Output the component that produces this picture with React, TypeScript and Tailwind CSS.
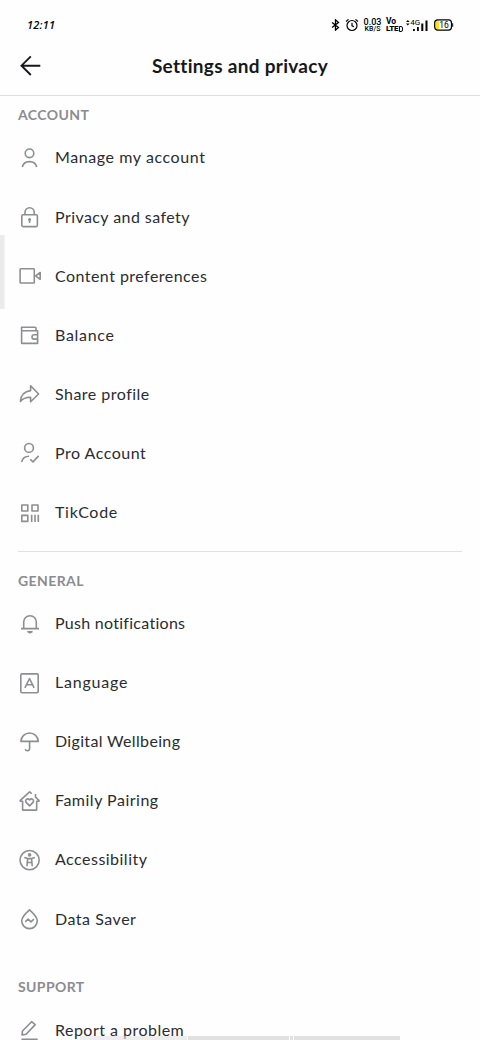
import type { ReactNode } from "react"

type Item = {
  label: string
  icon: ReactNode
  spacing: string
}

const accountItems: Item[] = [
  {
    label: "Manage my account",
    spacing: "tracking-[0.58px]",
    icon: (
      <>
        <circle cx="11.5" cy="7.3" r="4.3" />
        <path d="M4.3 21c.7-3.6 3.5-5.4 7.2-5.4s6.5 1.8 7.2 5.4" />
      </>
    ),
  },
  {
    label: "Privacy and safety",
    spacing: "tracking-[0.43px]",
    icon: (
      <>
        <rect x="3.8" y="9.8" width="15.6" height="11.8" rx="1.3" />
        <path d="M7 9.8V7.4a4.6 4.6 0 0 1 9.2 0v2.4M11.6 14.5v3.6" />
        <circle cx="11.6" cy="14.5" r=".7" />
      </>
    ),
  },
  {
    label: "Content preferences",
    spacing: "tracking-[0.46px]",
    icon: (
      <>
        <rect x="2.1" y="4.8" width="14.2" height="14.2" rx=".8" />
        <path d="m17.6 11.8 4.6-3.3v6.8z" />
      </>
    ),
  },
  {
    label: "Balance",
    spacing: "tracking-[0.7px]",
    icon: (
      <>
        <path d="M18 7.6V5.2c0-.6-.4-1-1-1H3.6v15.5c0 .4.3.7.7.7h15.3V7.8H3.6" />
        <path d="M19.6 11.7h-3.4a2.2 2.2 0 0 0 0 4.4h3.4" />
      </>
    ),
  },
  {
    label: "Share profile",
    spacing: "tracking-[0.48px]",
    icon: <path d="m12.6 3.8 8 8.2-8 7.8v-4.6c-4.5-.1-7.6.9-10.2 4.2.5-6.3 4-10 10.2-10.8z" />,
  },
  {
    label: "Pro Account",
    spacing: "tracking-[0.5px]",
    icon: (
      <>
        <circle cx="11" cy="6.9" r="4.4" />
        <path d="M3.6 21c.9-3.9 3.6-5.8 7.5-5.8M12.2 18.4l2.8 2.5 5.6-6" />
      </>
    ),
  },
  {
    label: "TikCode",
    spacing: "tracking-[0.7px]",
    icon: (
      <>
        <rect x="3.8" y="4" width="6" height="6" />
        <rect x="14" y="4" width="6" height="6" />
        <rect x="3.8" y="14.4" width="6" height="6" />
        <path d="M13.7 13.7v7.4M17 13.7v7.4M20.3 13.7v7.4" />
      </>
    ),
  },
]

const generalItems: Item[] = [
  {
    label: "Push notifications",
    spacing: "tracking-[0.28px]",
    icon: (
      <>
        <path d="M3 16.6h18M5.7 16.4V10a6.3 6.3 0 0 1 12.6 0v6.4" />
        <path d="M10 19.7h4l-2 1z" />
      </>
    ),
  },
  {
    label: "Language",
    spacing: "tracking-[0.78px]",
    icon: (
      <>
        <rect x="2.8" y="2.9" width="17.4" height="18.8" rx="1.2" />
        <path d="m6.9 16.8 4.6-9.3 4.6 9.3M8.5 13.8h6" />
      </>
    ),
  },
  {
    label: "Digital Wellbeing",
    spacing: "tracking-[0.34px]",
    icon: <path d="M2.9 11.4c.3-5 4-8.4 8.7-8.4s8.4 3.4 8.7 8.4zM11.6 11.4v7.2c0 1.5-1 2.2-2.2 2.2-1.1 0-1.9-.6-2.1-1.6" />,
  },
  {
    label: "Family Pairing",
    spacing: "tracking-[0.5px]",
    icon: (
      <>
        <path d="M13.7 4.6 11.6 2.9l-9.3 8.4c-.4.4-.2.9.4.9h1.9v8.2c0 .4.3.7.7.7h12.7c.4 0 .7-.3.7-.7v-8.2h1.9c.6 0 .7-.5.3-.9l-3.4-3.1V5" />
        <path d="M11.6 16.9 8.2 13.4c-1.8-2.3 1.4-4.9 3.4-2.5 2-2.4 5.2.2 3.4 2.5z" />
      </>
    ),
  },
  {
    label: "Accessibility",
    spacing: "tracking-[0.48px]",
    icon: (
      <>
        <circle cx="11.6" cy="12.1" r="9.6" />
        <circle cx="11.6" cy="6.9" r="1.8" fill="currentColor" stroke="none" />
        <path d="M6.3 9.6 9.6 10.6h4l3.3-1M9.6 10.6 9 18.3M13.6 10.6l.6 7.7M9.4 14.5h4.4" />
      </>
    ),
  },
  {
    label: "Data Saver",
    spacing: "tracking-[0.52px]",
    icon: (
      <>
        <path d="M11.5 2.9c3.5 3.1 7.8 7 7.8 10.9a7.8 7.8 0 0 1-15.6 0c0-3.9 4.3-7.8 7.8-10.9z" />
        <path d="m7.2 14.8 2.9-2.6 2.9 2.6 2.9-2.6" />
      </>
    ),
  },
]

const supportItems: Item[] = [
  {
    label: "Report a problem",
    spacing: "tracking-[0.48px]",
    icon: (
      <>
        <path d="m4 16.9.5-3.9 9.1-9.3 3.6 2.9-9.1 9.6z" />
        <path d="M3.4 21.3h16.3" />
      </>
    ),
  },
]

function Row({ item }: { item: Item }) {
  return (
    <li className="flex h-[59.1px] shrink-0 items-center pl-[18px]">
      <svg
        viewBox="0 0 24 24"
        className="h-6 w-6 shrink-0 text-[#8d8e91]"
        fill="none"
        stroke="currentColor"
        strokeWidth="1.6"
        strokeLinejoin="round"
      >
        {item.icon}
      </svg>
      <span className={`ml-[13px] pb-px text-[16px] leading-6 whitespace-nowrap text-[#2b2c31] ${item.spacing}`}>
        {item.label}
      </span>
    </li>
  )
}

function SectionTitle({ children, className }: { children: ReactNode; className: string }) {
  return (
    <h2 className={`shrink-0 pl-[18px] text-[14px] leading-5 font-bold tracking-[0.4px] text-[#8b8c90] ${className}`}>
      {children}
    </h2>
  )
}

function StatusBar() {
  return (
    <div className="flex h-[50px] shrink-0 items-center justify-between pr-[26px] pl-[27px] text-black">
      <span className="font-['Open_Sans',sans-serif] text-[11px] font-semibold tracking-[0.2px] italic">12:11</span>
      <div className="flex items-center">
        <svg viewBox="0 0 10 14" className="h-[12px] w-[9px]" fill="none" stroke="currentColor" strokeWidth="1.5">
          <path d="m1 4 7.5 6L5 13V1l3.5 3L1 10" />
        </svg>
        <svg viewBox="0 0 14 14" className="ml-[5px] h-[14px] w-[14px]" fill="none" stroke="currentColor" strokeWidth="1.2">
          <circle cx="7" cy="7.5" r="5" />
          <path d="M7 4.8v3l2 .9M1 3.5 3.5 1.4M13 3.5l-2.5-2.1" />
        </svg>
        <div className="ml-[5px] flex w-[17px] flex-col items-center font-['Roboto',sans-serif] font-medium">
          <span className="text-[9px] leading-[8px]">0.03</span>
          <span className="text-[7px] leading-[7px]">KB/S</span>
        </div>
        <div className="ml-[5px] flex w-[17px] flex-col font-['Roboto',sans-serif] font-bold">
          <span className="text-[8.5px] leading-[7px]">Vo</span>
          <span className="flex items-center text-[8px] leading-[8px] font-black tracking-[-0.3px]">
            LTE
            <span className="ml-px h-[6px] w-[4px] rounded-r-[2px] border-[1.5px] border-black" />
          </span>
        </div>
        <svg viewBox="0 0 22 14" className="ml-[3px] h-[14px] w-[22px]" fill="currentColor">
          <path d="M0 4 1.8 2l1.8 2zM0 5.4h3.6L1.8 7.4z" />
          <text x="4.2" y="7.3" fontSize="8" fontFamily="Roboto, sans-serif">4G</text>
          <path d="M7 11h1.8v2H7zM11 9h1.8v4H11zM15.3 5.5h2V13h-2zM19.5 2.5h2V13h-2z" />
        </svg>
        <svg viewBox="0 0 20 12" className="ml-[6px] h-[12px] w-[20px]">
          <path d="M3.5 1.7H5v8.6H3.5c-1.2 0-2-.8-2-2V3.7c0-1.2.8-2 2-2z" fill="#ffe21f" />
          <rect x=".7" y=".9" width="16.8" height="10.2" rx="3" fill="none" stroke="currentColor" strokeWidth="1.2" />
          <path d="M18.2 4.2h1v3.6h-1z" />
          <text x="5.2" y="9" fontSize="8.5" fontFamily="Roboto, sans-serif">16</text>
        </svg>
      </div>
    </div>
  )
}

export default function App() {
  return (
    <div className="relative flex h-[1040px] w-[480px] flex-col overflow-hidden bg-[#fefefe] font-['Lato',sans-serif]">
      <StatusBar />

      <header className="grid h-[46px] shrink-0 grid-cols-[60px_1fr_60px] border-b border-[#dedede] pb-[13px]">
        <button aria-label="Back" className="pl-[20px] text-[#17181c]">
          <svg viewBox="0 0 22 22" className="h-[22px] w-[22px]" fill="none" stroke="currentColor" strokeWidth="1.9">
            <path d="M10.8 1.3 1.5 10.7l9.3 9.3M1.5 10.7h18.8" />
          </svg>
        </button>
        <h1 className="text-center text-[19px] leading-8 font-bold tracking-[0.3px] text-[#17181c]">
          Settings and privacy
        </h1>
      </header>

      <SectionTitle className="pt-[9px] pb-[3.4px]">ACCOUNT</SectionTitle>
      <ul className="shrink-0">
        {accountItems.map((item) => (
          <Row key={item.label} item={item} />
        ))}
      </ul>

      <div className="mx-[18px] mt-[9px] h-px shrink-0 bg-[#e0e0e1]" />

      <SectionTitle className="pt-[18.5px] pb-[3.5px]">GENERAL</SectionTitle>
      <ul className="shrink-0">
        {generalItems.map((item) => (
          <Row key={item.label} item={item} />
        ))}
      </ul>

      <SectionTitle className="pt-[28.5px] pb-[3.5px]">SUPPORT</SectionTitle>
      <ul className="shrink-0">
        {supportItems.map((item) => (
          <Row key={item.label} item={item} />
        ))}
      </ul>

      {/* Edge panel handle */}
      <div className="absolute top-[235px] left-0 h-[74px] w-[5px] border-r border-[#f4f4f4] bg-[#ebebeb]" />

      {/* Gesture bars */}
      <div className="absolute bottom-0 left-[80px] flex h-[4px] w-[320px] gap-px">
        <div className="w-[107px] bg-[#e1e1e1]/60" />
        <div className="w-[101px] bg-[#e1e1e1]" />
        <div className="w-[3px] bg-[#e1e1e1]" />
        <div className="flex-1 bg-[#e1e1e1]" />
      </div>
    </div>
  )
}
